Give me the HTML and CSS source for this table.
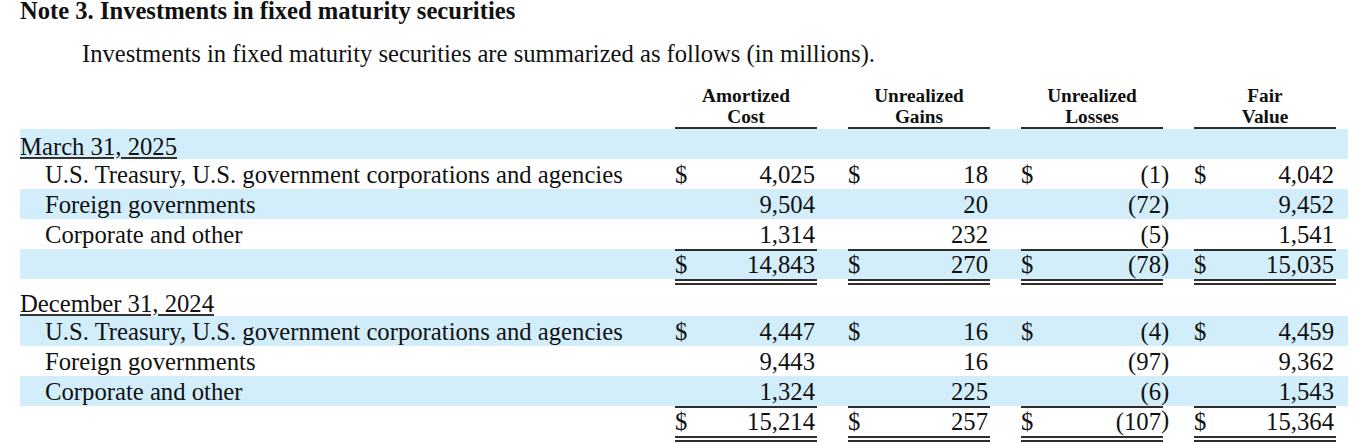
FILE: index.html
```html
<!DOCTYPE html>
<html lang="en">
<head>
<meta charset="utf-8">
<title>Note 3. Investments in fixed maturity securities</title>
<link rel="stylesheet" href="styles.css">
</head>
<body>
<div class="page">
  <h1 class="title">Note 3. Investments in fixed maturity securities</h1>
  <p class="intro">Investments in fixed maturity securities are summarized as follows (in millions).</p>

  <div class="table">
    <div class="hdr">
      <div class="lbl"></div>
      <div class="hc">Amortized<br>Cost</div><div class="g"></div>
      <div class="hc">Unrealized<br>Gains</div><div class="g"></div>
      <div class="hc">Unrealized<br>Losses</div><div class="g"></div>
      <div class="hc">Fair<br>Value</div><div class="g last"></div>
    </div>

    <div class="row sec band first"><div class="lbl"><span class="u">March 31, 2025</span></div></div>
    <div class="row">
      <div class="lbl ind">U.S. Treasury, U.S. government corporations and agencies</div>
      <div class="c"><span>$</span><span>4,025</span></div><div class="g"></div>
      <div class="c"><span>$</span><span>18</span></div><div class="g"></div>
      <div class="c"><span>$</span><span>(1</span></div><div class="g"><span class="p">)</span></div>
      <div class="c"><span>$</span><span>4,042</span></div><div class="g last"></div>
    </div>
    <div class="row band">
      <div class="lbl ind">Foreign governments</div>
      <div class="c"><span></span><span>9,504</span></div><div class="g"></div>
      <div class="c"><span></span><span>20</span></div><div class="g"></div>
      <div class="c"><span></span><span>(72</span></div><div class="g"><span class="p">)</span></div>
      <div class="c"><span></span><span>9,452</span></div><div class="g last"></div>
    </div>
    <div class="row">
      <div class="lbl ind">Corporate and other</div>
      <div class="c"><span></span><span>1,314</span></div><div class="g"></div>
      <div class="c"><span></span><span>232</span></div><div class="g"></div>
      <div class="c"><span></span><span>(5</span></div><div class="g"><span class="p">)</span></div>
      <div class="c"><span></span><span>1,541</span></div><div class="g last"></div>
    </div>
    <div class="row total band">
      <div class="lbl"></div>
      <div class="c"><span>$</span><span>14,843</span></div><div class="g"></div>
      <div class="c"><span>$</span><span>270</span></div><div class="g"></div>
      <div class="c"><span>$</span><span>(78</span></div><div class="g"><span class="p">)</span></div>
      <div class="c"><span>$</span><span>15,035</span></div><div class="g last"></div>
    </div>

    <div class="row sec second"><div class="lbl"><span class="u">December 31, 2024</span></div></div>
    <div class="row band">
      <div class="lbl ind">U.S. Treasury, U.S. government corporations and agencies</div>
      <div class="c"><span>$</span><span>4,447</span></div><div class="g"></div>
      <div class="c"><span>$</span><span>16</span></div><div class="g"></div>
      <div class="c"><span>$</span><span>(4</span></div><div class="g"><span class="p">)</span></div>
      <div class="c"><span>$</span><span>4,459</span></div><div class="g last"></div>
    </div>
    <div class="row">
      <div class="lbl ind">Foreign governments</div>
      <div class="c"><span></span><span>9,443</span></div><div class="g"></div>
      <div class="c"><span></span><span>16</span></div><div class="g"></div>
      <div class="c"><span></span><span>(97</span></div><div class="g"><span class="p">)</span></div>
      <div class="c"><span></span><span>9,362</span></div><div class="g last"></div>
    </div>
    <div class="row band">
      <div class="lbl ind">Corporate and other</div>
      <div class="c"><span></span><span>1,324</span></div><div class="g"></div>
      <div class="c"><span></span><span>225</span></div><div class="g"></div>
      <div class="c"><span></span><span>(6</span></div><div class="g"><span class="p">)</span></div>
      <div class="c"><span></span><span>1,543</span></div><div class="g last"></div>
    </div>
    <div class="row total">
      <div class="lbl"></div>
      <div class="c"><span>$</span><span>15,214</span></div><div class="g"></div>
      <div class="c"><span>$</span><span>257</span></div><div class="g"></div>
      <div class="c"><span>$</span><span>(107</span></div><div class="g"><span class="p">)</span></div>
      <div class="c"><span>$</span><span>15,364</span></div><div class="g last"></div>
    </div>
  </div>
</div>
</body>
</html>
```

FILE: styles.css
```css
html, body {
  margin: 0;
  padding: 0;
  background: #ffffff;
}

body {
  font-family: "Liberation Serif", "Times New Roman", serif;
  color: #111111;
  overflow: hidden;
}

.page {
  padding: 0 12px 0 20px;
}

.title {
  margin: 0;
  font-size: 24.6px;
  font-weight: 700;
  line-height: 22px;
}

.intro {
  margin: 20px 0 0 62px;
  font-size: 24.6px;
  line-height: 24px;
}

.table {
  width: 1328px;
  margin-top: 19px;
  font-size: 24.7px;
}

.hdr {
  display: flex;
}

.hc {
  width: 142px;
  flex: none;
  text-align: center;
  font-weight: 700;
  font-size: 19.3px;
  line-height: 21px;
  border-bottom: 2px solid #2e2e2e;
}

.lbl {
  width: 655px;
  flex: none;
  white-space: nowrap;
}

.lbl.ind {
  padding-left: 25px;
  box-sizing: border-box;
}

.g {
  width: 31px;
  flex: none;
}

.g.last {
  width: 12px;
}

.p {
  display: inline-block;
  margin-left: -2px;
}

.row {
  display: flex;
  height: 30px;
  line-height: 26px;
}

.row > div {
  box-sizing: border-box;
  padding-top: 3px;
  height: 30px;
}

.row.band {
  background: linear-gradient(#d3eefb, #d3eefb) 0 0 / 100% 30px no-repeat;
}

.c {
  width: 142px;
  flex: none;
  display: flex;
  justify-content: space-between;
  padding-right: 2px;
}

.row.sec.first {
  height: 30px;
}

.row.sec.first > div {
  padding-top: 6px;
  line-height: 24px;
}

.row.sec.second {
  height: 31px;
}

.row.sec.second > div {
  height: 31px;
  padding-top: 7px;
  line-height: 24px;
}

.u {
  text-decoration: underline;
  text-decoration-thickness: 1.5px;
  text-underline-offset: 2px;
  text-decoration-color: #333;
}

.row.total {
  height: 36px;
}

.row.total > div {
  height: 36px;
  padding-top: 1px;
}

.row.total > .c {
  border-top: 2px solid #2e2e2e;
  border-bottom: 6px double #2e2e2e;
}
```
